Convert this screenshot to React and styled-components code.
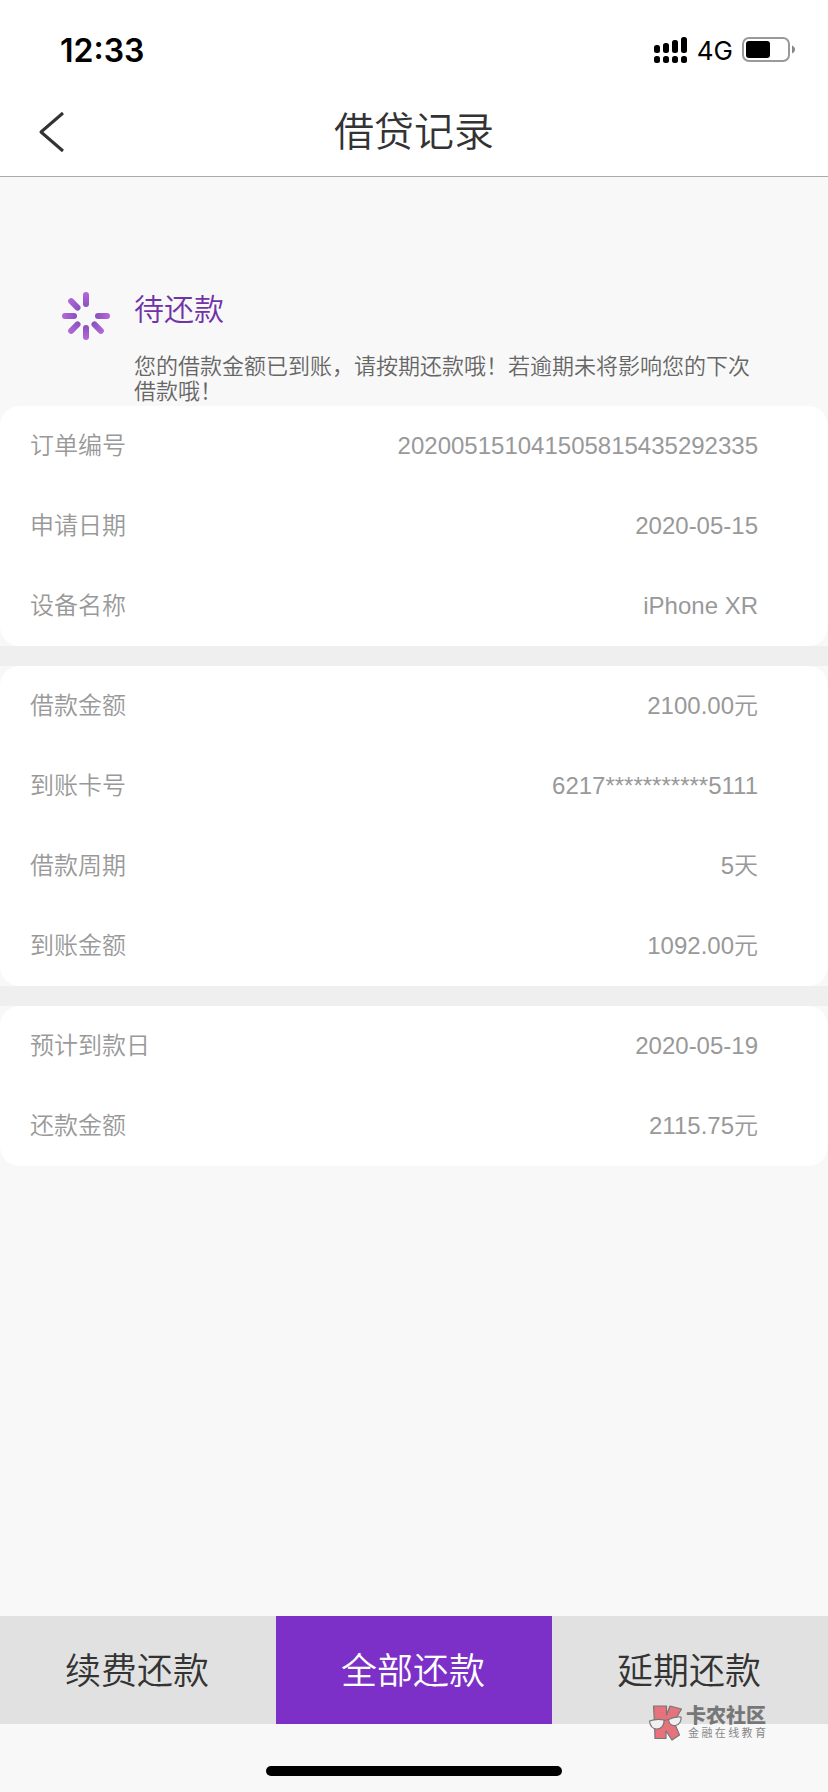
import styled, { createGlobalStyle } from "styled-components";

const GlobalStyle = createGlobalStyle`
  * {
    box-sizing: border-box;
  }

  body {
    margin: 0;
    background-color: #f8f8f8;
    font-family: "Liberation Sans", "Noto Sans CJK SC", sans-serif;
    font-weight: 350;
  }
`;

const Page = styled.div`
  display: flex;
  flex-direction: column;
  min-height: 100vh;
`;

const StatusBar = styled.div`
  display: flex;
  align-items: center;
  justify-content: space-between;
  height: 88px;
  padding: 12px 32px 0 60px;
  background-color: #fff;
  color: #000;
  font-family: Inter, sans-serif;
`;

const Time = styled.span`
  font-size: 32px;
  font-weight: 600;
`;

const Signals = styled.div`
  display: flex;
  align-items: center;
  gap: 9px;
  font-size: 26px;
  font-weight: 400;
`;

const NavBar = styled.header`
  display: grid;
  grid-template-columns: 100px 1fr 100px;
  align-items: center;
  height: 89px;
  border-bottom: 1px solid #aaa;
  background-color: #fff;
`;

const BackButton = styled.button`
  display: flex;
  align-items: center;
  height: 88px;
  padding: 0 0 0 38px;
  border: none;
  background: none;
  cursor: pointer;
`;

const Title = styled.h1`
  margin: 0;
  color: #333;
  font-size: 40px;
  font-weight: inherit;
  line-height: 88px;
  text-align: center;
`;

const Status = styled.section`
  display: flex;
  gap: 24px;
  padding: 113px 70px 2px 62px;
`;

const StatusText = styled.div`
  flex: 1;
`;

const StatusTitle = styled.h2`
  margin: 0 0 24px;
  color: #7232a8;
  font-size: 30px;
  font-weight: inherit;
  line-height: 40px;
`;

const StatusNote = styled.p`
  margin: 0;
  color: #666;
  font-size: 22px;
  line-height: 25px;
`;

const SpinnerIcon = styled.svg`
  flex: none;
  margin-top: 2px;
`;

const Cards = styled.main`
  flex: 1;
`;

const Card = styled.dl`
  margin: 0;
  border-radius: 20px;
  background-color: #fff;
`;

const Divider = styled.div`
  height: 20px;
  background-color: #efefef;
`;

const Row = styled.div`
  display: flex;
  justify-content: space-between;
  padding: 0 70px 0 30px;
  color: #999;
  font-size: 24px;
  line-height: 80px;
`;

const Label = styled.dt`
  margin: 0;
`;

const Value = styled.dd`
  margin: 0;
`;

const Footer = styled.footer`
  position: relative;
`;

const Actions = styled.div`
  display: grid;
  grid-template-columns: repeat(3, 1fr);
`;

const ActionButton = styled.button`
  height: 108px;
  padding: 0 2px 4px 0;
  border: none;
  background-color: ${({ $primary }) => ($primary ? "#7d30c7" : "#e1e1e1")};
  color: ${({ $primary }) => ($primary ? "#fff" : "#333")};
  font-family: inherit;
  font-size: 36px;
  font-weight: inherit;
  cursor: pointer;
`;

const HomeArea = styled.div`
  display: flex;
  justify-content: center;
  padding: 42px 0 16px;
`;

const HomeIndicator = styled.div`
  width: 296px;
  height: 10px;
  border-radius: 5px;
  background-color: #000;
`;

const Watermark = styled.div`
  position: absolute;
  top: 89px;
  right: 62px;
  display: flex;
  align-items: center;
  gap: 3px;
  color: #777;
`;

const WatermarkName = styled.div`
  font-size: 20px;
  font-weight: 900;
  line-height: 20px;
`;

const WatermarkSlogan = styled.div`
  display: flex;
  justify-content: space-between;
  padding-left: 2px;
  color: #888;
  font-size: 11px;
  font-weight: 400;
  line-height: 14px;
`;

const groups = [
  [
    ["订单编号", "202005151041505815435292335"],
    ["申请日期", "2020-05-15"],
    ["设备名称", "iPhone XR"],
  ],
  [
    ["借款金额", "2100.00元"],
    ["到账卡号", "6217***********5111"],
    ["借款周期", "5天"],
    ["到账金额", "1092.00元"],
  ],
  [
    ["预计到款日", "2020-05-19"],
    ["还款金额", "2115.75元"],
  ],
];

function SignalIcon() {
  const heights = [8, 10, 13, 16];
  return (
    <svg width="34" height="28" viewBox="0 0 34 28">
      {heights.map((h, i) => (
        <g key={h}>
          <rect x={i * 9} y={17 - h} width="6" height={h} rx="2.5" />
          <rect x={i * 9} y="20" width="6" height="7" rx="2.5" />
        </g>
      ))}
    </svg>
  );
}

function BatteryIcon() {
  return (
    <svg width="54" height="26" viewBox="0 0 54 26">
      <rect x="1" y="1" width="46" height="23" rx="6" fill="none" stroke="#999" strokeWidth="2" />
      <rect x="4" y="4" width="24" height="17" rx="3" />
      <path d="M50 8.500c2 1 3 2.300 3 4s-1 3-3 4z" fill="#888" />
    </svg>
  );
}

// Seven spokes, the top right one is left out
function Spinner() {
  const angles = [0, 90, 135, 180, 225, 270, 315];
  return (
    <SpinnerIcon width="48" height="48" viewBox="0 0 48 48">
      <defs>
        <linearGradient id="spoke" x1="0" y1="0" x2="0" y2="1">
          <stop offset="0" stopColor="#b668dc" />
          <stop offset="1" stopColor="#8850bd" />
        </linearGradient>
      </defs>
      {angles.map((angle) => (
        <rect
          key={angle}
          x="21"
          y="0"
          width="6"
          height="15"
          rx="3"
          fill="url(#spoke)"
          transform={`rotate(${angle} 24 24)`}
        />
      ))}
    </SpinnerIcon>
  );
}

function WatermarkLogo() {
  return (
    <svg width="35" height="36" viewBox="0 0 35 36">
      <g stroke="#777" strokeWidth="1.200" strokeLinejoin="round">
        <path d="M5.500 1H18.500V10L22 1l11.500 3L26 17l5.500 13L24 35l-6-9v7.500H7l-.500-16z" fill="#e8727c" />
        <path d="M1.500 16c4-1.500 9-2 14.500-1 .5 5-2.500 9-7 9s-7-3.500-7.500-8zM20.500 14.500c4-2 8-3 12.500-2.500.5 4-1.500 8-5.500 8.500s-6.500-2-7-6z" fill="#f0f0f0" />
        <path d="M16 15.500l4.500-1" fill="none" />
      </g>
    </svg>
  );
}

export default function App() {
  return (
    <Page>
      <GlobalStyle />
      <StatusBar>
        <Time>12:33</Time>
        <Signals>
          <SignalIcon />
          <span>4G</span>
          <BatteryIcon />
        </Signals>
      </StatusBar>
      <NavBar>
        <BackButton aria-label="返回">
          <svg width="28" height="42" viewBox="0 0 28 42" fill="none" stroke="#333" strokeWidth="3">
            <path d="M25 2 3 21l22 19" strokeLinejoin="round" />
          </svg>
        </BackButton>
        <Title>借贷记录</Title>
      </NavBar>

      <Status>
        <Spinner />
        <StatusText>
          <StatusTitle>待还款</StatusTitle>
          <StatusNote>您的借款金额已到账，请按期还款哦！若逾期未将影响您的下次借款哦！</StatusNote>
        </StatusText>
      </Status>

      <Cards>
        {groups.map((rows, index) => (
          <div key={index}>
            {index > 0 && <Divider />}
            <Card>
              {rows.map(([label, value]) => (
                <Row key={label}>
                  <Label>{label}</Label>
                  <Value>{value}</Value>
                </Row>
              ))}
            </Card>
          </div>
        ))}
      </Cards>

      <Footer>
        <Actions>
          <ActionButton>续费还款</ActionButton>
          <ActionButton $primary>全部还款</ActionButton>
          <ActionButton>延期还款</ActionButton>
        </Actions>
        <HomeArea>
          <HomeIndicator />
        </HomeArea>
        <Watermark>
          <WatermarkLogo />
          <div>
            <WatermarkName>卡农社区</WatermarkName>
            <WatermarkSlogan>
              {[..."金融在线教育"].map((char) => (
                <span key={char}>{char}</span>
              ))}
            </WatermarkSlogan>
          </div>
        </Watermark>
      </Footer>
    </Page>
  );
}
